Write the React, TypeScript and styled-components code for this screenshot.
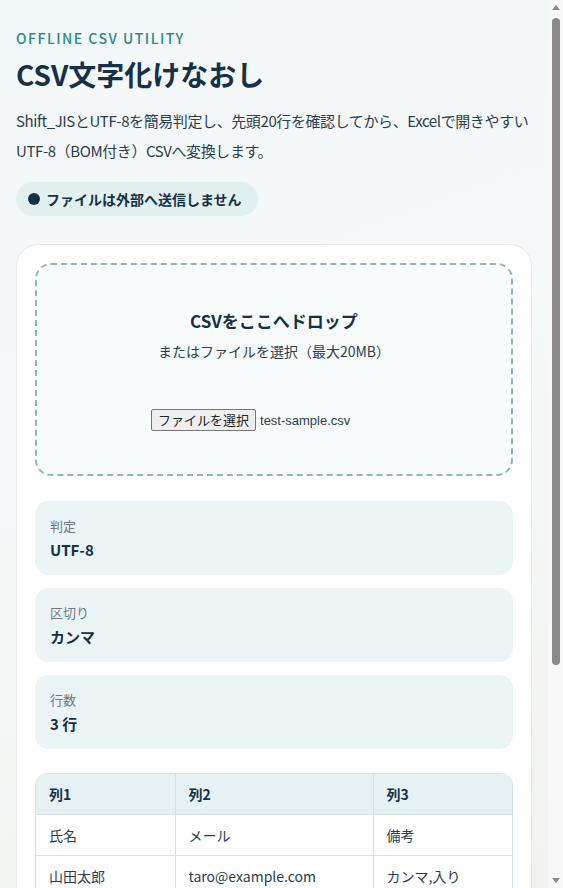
import React from 'react';
import styled, { createGlobalStyle } from 'styled-components';

const GlobalStyle = createGlobalStyle`
  html, body {
    margin: 0;
    padding: 0;
  }
  body {
    font-family: 'Noto Sans CJK JP', 'Noto Sans', sans-serif;
    color: #173049;
    background: linear-gradient(160deg, #f2f7f7 0%, #f6f9f9 40%, #f1f2ee 100%);
    min-height: 100vh;
  }
`;

// fake classic scrollbar, the reference was taken with one
const ScrollTrack = styled.div`
  position: fixed;
  top: 0;
  right: 0;
  width: 15px;
  height: 100vh;
  background: #f8f8f8;
  display: flex;
  flex-direction: column;
  align-items: center;
`;

const Arrow = styled.span<{ $down?: boolean }>`
  margin: ${(p) => (p.$down ? 'auto 0 5px' : '5px 0 0')};
  width: 0;
  height: 0;
  border-left: 4px solid transparent;
  border-right: 4px solid transparent;
  ${(p) =>
    p.$down ? 'border-top: 5px solid #8a8a8a;' : 'border-bottom: 5px solid #8a8a8a;'}
`;

const Thumb = styled.span`
  margin-top: 8px;
  width: 8px;
  height: 647px;
  border-radius: 4px;
  background: #8a8a8a;
`;

const Page = styled.main`
  padding: 28px 31px 40px 16px;
`;

const Eyebrow = styled.div`
  font-size: 14px;
  font-weight: 500;
  letter-spacing: 1.5px;
  color: #2a8a88;
  line-height: 20px;
`;

const Title = styled.h1`
  margin: 6px 0 0;
  font-size: 28px;
  font-weight: 700;
  line-height: 40px;
  color: #173049;
`;

const Lead = styled.p`
  margin: 12px 0 0;
  font-size: 15px;
  line-height: 30px;
  letter-spacing: -0.4px;
  color: #2b3d4d;
`;

const Pill = styled.div`
  display: inline-flex;
  align-items: center;
  gap: 6px;
  margin-top: 16px;
  height: 34px;
  padding: 0 16px 0 12px;
  border-radius: 17px;
  background: #e2f0f0;
  font-size: 14px;
  font-weight: 700;
  color: #173049;
`;

const Dot = styled.span`
  width: 12px;
  height: 12px;
  border-radius: 50%;
  background: #173049;
`;

const Card = styled.section`
  margin-top: 28px;
  padding: 18px;
  background: #ffffff;
  border: 1px solid #e3eaea;
  border-radius: 22px;
  display: flex;
  flex-direction: column;
`;

const DropZone = styled.div`
  height: 213px;
  box-sizing: border-box;
  border: 2px dashed #8fb6bd;
  border-radius: 16px;
  background: #f7fbfb;
  display: flex;
  flex-direction: column;
  align-items: center;
  padding-top: 44px;
`;

const DropTitle = styled.div`
  font-size: 17px;
  font-weight: 700;
  line-height: 24px;
  color: #173049;
`;

const DropSub = styled.div`
  margin-top: 7px;
  font-size: 14px;
  line-height: 22px;
  color: #2b3d4d;
`;

const FileRow = styled.div`
  margin-top: 47px;
  width: 246px;
  display: flex;
  align-items: center;
  gap: 4px;
  font-family: 'Liberation Sans', Arial, sans-serif;
  font-size: 13px;
  color: #2b3d4d;
`;

const FileButton = styled.button`
  font-family: 'Noto Sans CJK JP', sans-serif;
  font-size: 13px;
  line-height: 18px;
  padding: 1px 6px;
  color: #222;
  background: #efefef;
  border: 1px solid #767676;
  border-radius: 2px;
`;

const Stats = styled.div`
  margin-top: 25px;
  display: flex;
  flex-direction: column;
  gap: 13px;
`;

const Stat = styled.div`
  height: 74px;
  box-sizing: border-box;
  padding: 14px 15px;
  border-radius: 14px;
  background: #ebf5f5;
`;

const StatLabel = styled.div`
  font-size: 13px;
  line-height: 22px;
  color: #6b7a85;
`;

const StatValue = styled.div`
  margin-top: 1px;
  font-size: 15px;
  font-weight: 700;
  line-height: 24px;
  color: #173049;
`;

const TableWrap = styled.div`
  margin-top: 24px;
  border: 1px solid #d6e3e6;
  border-radius: 12px;
  overflow: hidden;
`;

const Table = styled.table`
  width: 100%;
  table-layout: fixed;
  border-collapse: collapse;
  font-size: 14px;
  color: #2b3d4d;
`;

const Th = styled.th<{ $w?: number }>`
  box-sizing: border-box;
  width: ${(p) => (p.$w ? `${p.$w}px` : 'auto')};
  text-align: left;
  font-weight: 700;
  height: 40px;
  padding: 0 13px;
  background: #e5f1f2;
  color: #173049;
  border-bottom: 1px solid #d6e3e6;
  & + & {
    border-left: 1px solid #d6e3e6;
  }
`;

const Td = styled.td`
  height: 40px;
  padding: 0 13px;
  white-space: nowrap;
  border-top: 1px solid #d6e3e6;
  & + & {
    border-left: 1px solid #d6e3e6;
  }
`;

const stats = [
  { label: '判定', value: 'UTF-8' },
  { label: '区切り', value: 'カンマ' },
  { label: '行数', value: '3 行' },
];

const rows = [
  ['氏名', 'メール', '備考'],
  ['山田太郎', 'taro@example.com', 'カンマ,入り'],
  ['佐藤花子', 'hanako@example.com', '改行なし'],
];

export default function App() {
  return (
    <>
      <GlobalStyle />
      <Page>
        <Eyebrow>OFFLINE CSV UTILITY</Eyebrow>
        <Title>CSV文字化けなおし</Title>
        <Lead>
          Shift_JISとUTF-8を簡易判定し、先頭20行を確認してから、Excelで開きやすいUTF-8（BOM付き）CSVへ変換します。
        </Lead>
        <Pill>
          <Dot />
          ファイルは外部へ送信しません
        </Pill>
        <Card>
          <DropZone>
            <DropTitle>CSVをここへドロップ</DropTitle>
            <DropSub>またはファイルを選択（最大20MB）</DropSub>
            <FileRow>
              <FileButton type="button">ファイルを選択</FileButton>
              <span>test-sample.csv</span>
            </FileRow>
          </DropZone>
          <Stats>
            {stats.map((s) => (
              <Stat key={s.label}>
                <StatLabel>{s.label}</StatLabel>
                <StatValue>{s.value}</StatValue>
              </Stat>
            ))}
          </Stats>
          <TableWrap>
            <Table>
              <thead>
                <tr>
                  <Th $w={139}>列1</Th>
                  <Th $w={198}>列2</Th>
                  <Th>列3</Th>
                </tr>
              </thead>
              <tbody>
                {rows.map((r, i) => (
                  <tr key={i}>
                    {r.map((c, j) => (
                      <Td key={j}>{c}</Td>
                    ))}
                  </tr>
                ))}
              </tbody>
            </Table>
          </TableWrap>
        </Card>
      </Page>
      <ScrollTrack>
        <Arrow />
        <Thumb />
        <Arrow $down />
      </ScrollTrack>
    </>
  );
}
